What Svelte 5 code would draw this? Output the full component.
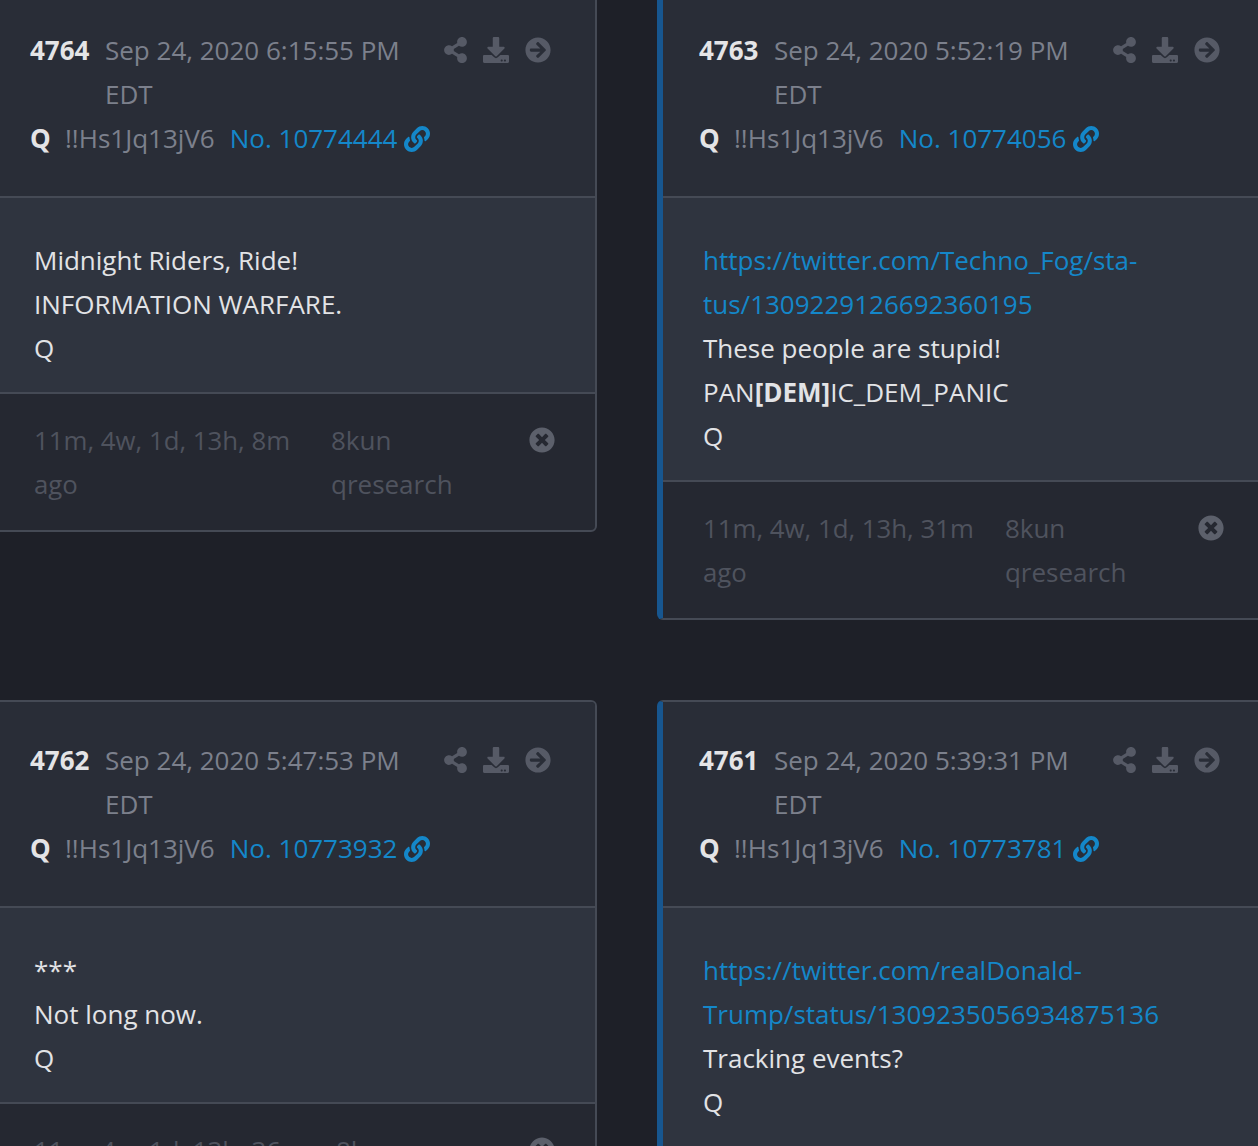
<script>
  const posts = [
    { n: 4764, date: 'Sep 24, 2020 6:15:55 PM', no: 10774444, ago: '8m', body: [['Midnight Riders, Ride!'], ['INFORMATION WARFARE.'], ['Q']] },
    { n: 4763, date: 'Sep 24, 2020 5:52:19 PM', no: 10774056, ago: '31m', marked: true, body: [
      [{ href: 'https://twitter.com/Techno_Fog/sta-' }], [{ href: 'tus/1309229126692360195' }],
      ['These people are stupid!'], ['PAN', { strong: '[DEM]' }, 'IC_DEM_PANIC'], ['Q']] },
    { n: 4762, date: 'Sep 24, 2020 5:47:53 PM', no: 10773932, ago: '36m', body: [['***'], ['Not long now.'], ['Q']] },
    { n: 4761, date: 'Sep 24, 2020 5:39:31 PM', no: 10773781, ago: '44m', marked: true, body: [
      [{ href: 'https://twitter.com/realDonald-' }], [{ href: 'Trump/status/1309235056934875136' }],
      ['Tracking events?'], ['Q']] }
  ];

  const icons = {
    share: ['0 0 448 512', 'M352 320c-22.608 0-43.387 7.819-59.79 20.895l-102.486-64.054a96.551 96.551 0 0 0 0-41.683l102.486-64.054C308.613 184.181 329.392 192 352 192c53.019 0 96-42.981 96-96S405.019 0 352 0s-96 42.981-96 96c0 7.158.79 14.13 2.276 20.841L155.79 180.895C139.387 167.819 118.608 160 96 160c-53.019 0-96 42.981-96 96s42.981 96 96 96c22.608 0 43.387-7.819 59.79-20.895l102.486 64.054A96.301 96.301 0 0 0 256 416c0 53.019 42.981 96 96 96s96-42.981 96-96-42.981-96-96-96z'],
    download: ['0 0 512 512', 'M216 0h80c13.3 0 24 10.7 24 24v168h87.7c17.8 0 26.7 21.5 14.1 34.1L269.7 378.3c-7.5 7.5-19.8 7.5-27.3 0L90.1 226.1c-12.6-12.6-3.7-34.1 14.1-34.1H192V24c0-13.3 10.7-24 24-24zm296 376v112c0 13.3-10.7 24-24 24H24c-13.3 0-24-10.7-24-24V376c0-13.3 10.7-24 24-24h146.7l49 49c20.1 20.1 52.5 20.1 72.6 0l49-49H488c13.3 0 24 10.7 24 24zm-124 88c0-11-9-20-20-20s-20 9-20 20 9 20 20 20 20-9 20-20zm64 0c0-11-9-20-20-20s-20 9-20 20 9 20 20 20 20-9 20-20z'],
    arrow: ['0 0 512 512', 'M256 8c137 0 248 111 248 248S393 504 256 504 8 393 8 256 119 8 256 8zm-28.9 143.6l75.5 72.4H120c-13.3 0-24 10.7-24 24v16c0 13.3 10.7 24 24 24h182.6l-75.5 72.4c-9.7 9.3-9.9 24.8-.4 34.3l11 10.9c9.4 9.4 24.6 9.4 33.9 0L404.3 273c9.4-9.4 9.4-24.6 0-33.9L271.6 106.3c-9.4-9.4-24.6-9.4-33.9 0l-11 10.9c-9.5 9.6-9.3 25.1.4 34.4z'],
    close: ['0 0 512 512', 'M256 8C119 8 8 119 8 256s111 248 248 248 248-111 248-248S393 8 256 8zm121.6 313.1c4.7 4.7 4.7 12.3 0 17L338 377.6c-4.7 4.7-12.3 4.7-17 0L256 312l-65.1 65.6c-4.7 4.7-12.3 4.7-17 0L134.4 338c-4.7-4.7-4.7-12.3 0-17l65.6-65-65.6-65.1c-4.7-4.7-4.7-12.3 0-17l39.6-39.6c4.7-4.7 12.3-4.7 17 0l65 65.7 65.1-65.6c4.7-4.7 12.3-4.7 17 0l39.6 39.6c4.7 4.7 4.7 12.3 0 17L312 256l65.6 65.1z'],
    link: ['0 0 512 512', 'M326.612 185.391c59.747 59.809 58.927 155.698.36 214.59-.11.12-.24.25-.36.37l-67.2 67.2c-59.27 59.27-155.699 59.262-214.96 0-59.27-59.26-59.27-155.7 0-214.96l37.106-37.106c9.84-9.84 26.786-3.3 27.294 10.606.648 17.722 3.826 35.527 9.69 52.721 1.986 5.822.567 12.262-3.783 16.612l-13.087 13.087c-28.026 28.026-28.905 73.66-1.155 101.96 28.024 28.579 74.086 28.749 102.325.51l67.2-67.19c28.191-28.191 28.073-73.757 0-101.83-3.701-3.694-7.429-6.564-10.341-8.569a16.037 16.037 0 0 1-6.947-12.606c-.396-10.567 3.348-21.456 11.698-29.806l21.054-21.055c5.521-5.521 14.182-6.199 20.584-1.731a152.482 152.482 0 0 1 20.522 17.197zM467.547 44.449c-59.261-59.262-155.69-59.27-214.96 0l-67.2 67.2c-.12.12-.25.25-.36.37-58.566 58.892-59.387 154.781.36 214.59a152.454 152.454 0 0 0 20.521 17.196c6.402 4.468 15.064 3.789 20.584-1.731l21.054-21.055c8.35-8.35 12.094-19.239 11.698-29.806a16.037 16.037 0 0 0-6.947-12.606c-2.912-2.005-6.64-4.875-10.341-8.569-28.073-28.073-28.191-73.639 0-101.83l67.2-67.19c28.239-28.239 74.3-28.069 102.325.51 27.75 28.3 26.872 73.934-1.155 101.96l-13.087 13.087c-4.35 4.35-5.769 10.79-3.783 16.612 5.864 17.194 9.042 34.999 9.69 52.721.509 13.906 17.454 20.446 27.294 10.606l37.106-37.106c59.271-59.259 59.271-155.699.001-214.959z']
  };
</script>

{#snippet icon(name, cls)}
  <svg class={cls} viewBox={icons[name][0]} aria-hidden="true"><path d={icons[name][1]} fill="currentColor" /></svg>
{/snippet}

<div class="page">
  <div class="grid">
    {#each posts as post}
      <article class="card" class:marked={post.marked}>
        <header class="head">
          <div class="top">
            <strong class="num">{post.n}</strong>
            <span class="date">{post.date}<br />EDT</span>
            <div class="actions">
              {@render icon('share', 'ic-share')}
              {@render icon('download', 'ic-down')}
              {@render icon('arrow', 'ic-arrow')}
            </div>
          </div>
          <div class="meta">
            <strong class="q">Q</strong>
            <span class="trip">!!Hs1Jq13jV6</span>
            <a class="no" href="#top">No. {post.no} {@render icon('link', 'ic-link')}</a>
          </div>
        </header>
        <div class="body">
          {#each post.body as line}
            <p>
              {#each line as part}
                {#if typeof part === 'string'}{part}{:else if part.href}<a href="#top">{part.href}</a>{:else}<b>{part.strong}</b>{/if}
              {/each}
            </p>
          {/each}
        </div>
        <footer class="foot">
          <span class="time">11m, 4w, 1d, 13h, {post.ago}<br />ago</span>
          <span class="src">8kun<br />qresearch</span>
          {@render icon('close', 'ic-close')}
        </footer>
      </article>
    {/each}
  </div>
</div>

<style>
  :global(body) {
    margin: 0;
    background: #1e2028;
  }

  .page {
    height: 1146px;
    overflow: hidden;
    font-family: "Open Sans", "Noto Sans", sans-serif;
    font-size: 26px;
    line-height: 44px;
  }

  .grid {
    display: grid;
    grid-template-columns: 604px 609px;
    column-gap: 60px;
    row-gap: 80px;
    align-items: start;
    margin: -10px 0 0 -7px;
  }

  .card {
    border: 2px solid #454a55;
    border-left-width: 1px;
    border-radius: 6px;
    background: #252831;
    overflow: hidden;
  }

  .card.marked {
    border-left: 6px solid #17568f;
  }

  .head {
    background: #292d37;
    padding: 36px 36px 36px 36px;
    border-bottom: 2px solid #454a55;
  }

  .top {
    display: flex;
    align-items: flex-start;
  }

  .num {
    color: #e4e4e6;
    font-weight: 700;
    width: 75px;
    flex: none;
  }

  .date {
    color: #7c808c;
    flex: 1;
  }

  .actions {
    display: flex;
    align-items: center;
    color: #565a66;
    height: 44px;
    padding-right: 8px;
  }

  .ic-share {
    width: 23px;
    height: 26px;
  }

  .ic-down {
    width: 26px;
    height: 26px;
    margin-left: 16px;
  }

  .ic-arrow {
    width: 26px;
    height: 26px;
    margin-left: 16px;
  }

  .meta {
    display: flex;
    align-items: baseline;
  }

  .q {
    color: #e4e4e6;
    width: 35px;
  }

  .trip {
    color: #7c808c;
    margin-right: 15px;
  }

  .no {
    color: #1487c9;
    text-decoration: none;
  }

  .ic-link {
    width: 26px;
    height: 26px;
    vertical-align: -4px;
  }

  .body {
    background: #2f343f;
    padding: 40px 40px 22px;
    border-bottom: 2px solid #454a55;
    color: #e2e3e6;
  }

  .body p {
    margin: 0;
  }

  .body a {
    color: #1487c9;
    text-decoration: none;
  }

  .foot {
    display: flex;
    align-items: flex-start;
    padding: 24px 40px 24px;
    color: #4f535e;
  }

  .time {
    min-width: 297px;
    padding-right: 31px;
    box-sizing: border-box;
    font-size: 25.8px;
  }

  .src {
    flex: 1;
  }

  .ic-close {
    width: 26px;
    height: 26px;
    margin: 9px 0 0 0;
    color: #5c606b;
  }
</style>
